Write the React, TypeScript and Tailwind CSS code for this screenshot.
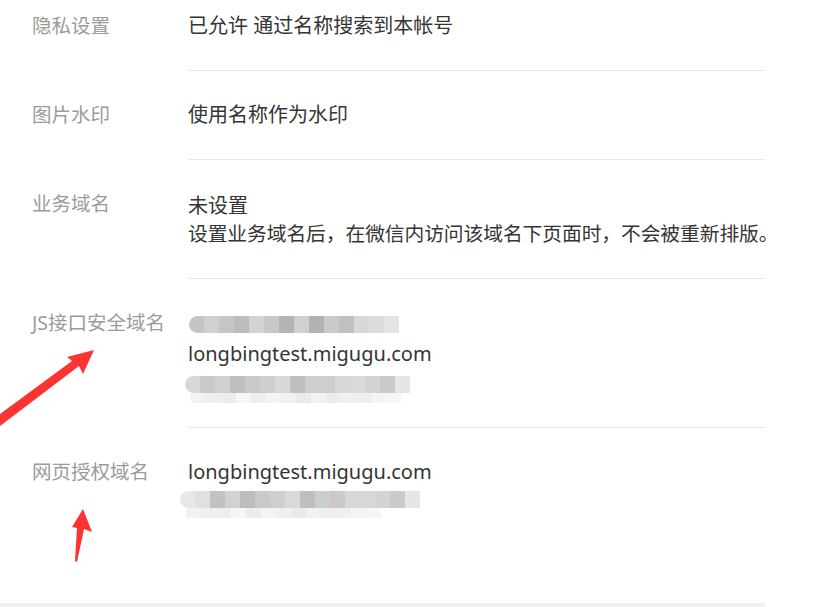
import React from "react";

const FONT = '"Noto Sans", "Noto Sans CJK SC", sans-serif';

function Mosaic({ colors, faint, offset = 0 }: { colors: string[]; faint?: string[]; offset?: number }) {
  return (
    <div className="flex flex-col blur-[0.6px]" style={{ marginLeft: offset }}>
      <div className="flex h-[17px]">
        {colors.map((c, i) => (
          <div
            key={i}
            className={i === 0 ? "h-full w-[15px] rounded-l-full" : "h-full w-[15px]"}
            style={{ background: c }}
          />
        ))}
      </div>
      {faint && (
        <div className="flex h-[10px] pl-[6px]">
          {faint.map((c, i) => (
            <div key={i} className="h-full w-[15px]" style={{ background: c }} />
          ))}
        </div>
      )}
    </div>
  );
}

function Row({
  label,
  children,
  border = true,
  extra = "",
}: {
  label: string;
  children: React.ReactNode;
  border?: boolean;
  extra?: string;
}) {
  return (
    <div className="flex">
      <div className="w-[188px] shrink-0 pl-[32px] py-[29px] text-[19.5px] leading-[30px] text-[#9b9b9b]">
        {label}
      </div>
      <div
        className={
          "w-[577px] py-[29px] text-[20px] leading-[30px] text-[#353535] " +
          (border ? "border-b border-[#e6e8eb] " : "") +
          extra
        }
      >
        {children}
      </div>
    </div>
  );
}

export default function App() {
  return (
    <div className="relative h-[607px] w-[823px] overflow-hidden bg-white" style={{ fontFamily: FONT }}>
      <div className="mt-[-18px] flex flex-col">
        <Row label="隐私设置">已允许 通过名称搜索到本帐号</Row>
        <Row label="图片水印">使用名称作为水印</Row>
        <Row label="业务域名" extra="pt-[31px] pb-[29px]">
          <div>未设置</div>
          <div className="mt-[-2px] whitespace-nowrap text-[19.8px] tracking-[-0.1px]">
            设置业务域名后，在微信内访问该域名下页面时，不会被重新排版。
          </div>
        </Row>
        <Row label="JS接口安全域名" extra="pt-[30px] pb-[28px]">
          <div className="flex h-[30px] items-center">
            <Mosaic
              colors={["#c4c4c6", "#d0d0d0", "#c6c6c6", "#bcbcbe", "#d4d4d2", "#c8c8ca", "#b4b4b8", "#d0d0cc", "#b2b2b6", "#cacaca", "#c0c0c0", "#d8d8d8", "#dcdcdc", "#e4e4e4"]}
              offset={1}
            />
          </div>
          <div>longbingtest.migugu.com</div>
          <div className="flex h-[30px] items-start pt-[7px]">
            <Mosaic
              colors={["#d8d6d8", "#cbc8cc", "#d0d0d0", "#c0bfbf", "#c8cacb", "#d0cfcc", "#d5d9d9", "#c0bfc0", "#cdd0d0", "#cfcecc", "#d6d9d9", "#dadada", "#d4d4d4", "#c8cbcb", "#e6e6e6"]}
              faint={["#f2f2f2", "#eeeeee", "#ececee", "#f6f6f6", "#eeeeee", "#f4f4f4", "#f0f0f0", "#eaeaea", "#f2f2f2", "#ececec", "#f0f0f0", "#eeeeee", "#f4f4f4", "#f6f6f6"]}
              offset={-3}
            />
          </div>
        </Row>
        <Row label="网页授权域名" border={false} extra="h-[175px]">
          <div>longbingtest.migugu.com</div>
          <div className="mt-[4px]">
            <Mosaic
              colors={["#e8e8e8", "#e0e0e0", "#c4c0c4", "#d2d2d2", "#bdbdbd", "#c6caca", "#d0cdca", "#d6dada", "#c0bec0", "#cacecf", "#cdc8c6", "#d6d8d8", "#d8d6d8", "#d4d4d4", "#c8cbcb", "#e6e6e6"]}
              faint={["#f2f2f2", "#f0f0f0", "#eeeeee", "#f6f6f6", "#ececec", "#f4f4f4", "#f0f0f0", "#eaeaea", "#f2f2f2", "#eeeeee", "#f0f0f0", "#f4f4f4", "#f6f6f6"]}
              offset={-8}
            />
          </div>
        </Row>
      </div>
      <div className="absolute left-0 top-[603px] h-[4px] w-[765px] bg-[#eef0f2]" />
      <svg className="absolute left-0 top-0" width="823" height="607" viewBox="0 0 823 607">
        <polygon points="-4,417 72,361 67,357 94,350 83,374 79,366 -4,429" fill="#fb3333" />
        <polygon points="83,509 92,532 84,529 77,562 75,561 77,528 72,527" fill="#fb3333" />
      </svg>
    </div>
  );
}
